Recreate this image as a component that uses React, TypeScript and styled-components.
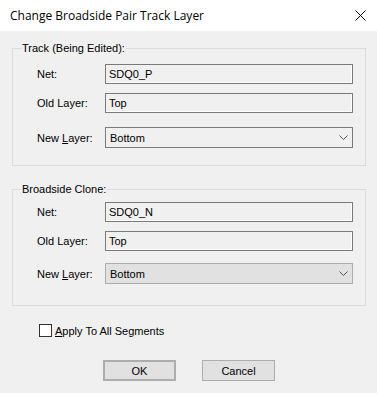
import styled, { createGlobalStyle } from "styled-components";

const GlobalStyle = createGlobalStyle`
  html, body {
    margin: 0;
    padding: 0;
    background: #f0f0f0;
  }
  body {
    font-family: "Liberation Sans", Arial, sans-serif;
    font-size: 11px;
    color: #000;
  }
`;

const Dialog = styled.div`
  width: 377px;
  height: 393px;
  background: #f0f0f0;
  display: flex;
  flex-direction: column;
  overflow: hidden;
`;

const TitleBar = styled.div`
  height: 31px;
  background: #fff;
  display: flex;
  align-items: center;
  justify-content: space-between;
  padding: 0 11px 0 10px;
  box-sizing: border-box;
`;

const Title = styled.span`
  font-family: "Open Sans", "Noto Sans", sans-serif;
  font-size: 12px;
  padding-bottom: 1px;
`;

const Body = styled.div`
  display: flex;
  flex-direction: column;
  padding: 0 11px 0 12px;
`;

const Group = styled.fieldset<{ $top: number; $height: number }>`
  margin: ${(p) => p.$top}px 0 0 0;
  padding: 0 12px 0 0;
  border: 1px solid #dcdcdc;
  height: ${(p) => p.$height}px;
  box-sizing: border-box;
  display: flex;
  flex-direction: column;
  min-width: 0;
`;

const Legend = styled.legend`
  margin-left: 8px;
  padding: 0 1px;
  line-height: 13px;
`;

const Row = styled.div<{ $gap: number }>`
  display: flex;
  align-items: center;
  margin: ${(p) => p.$gap}px 0 0 24px;
`;

const Label = styled.span`
  width: 68px;
  flex-shrink: 0;
`;

const Field = styled.div`
  width: 249px;
  height: 20px;
  box-sizing: border-box;
  border: 1px solid #7a7a7a;
  box-shadow: inset -1px -1px 0 #fff;
  background: #f0f0f0;
  display: flex;
  align-items: center;
  padding-left: 3px;
`;

const Combo = styled.div<{ $disabled?: boolean }>`
  width: 248px;
  height: 21px;
  box-sizing: border-box;
  border: 1px solid ${(p) => (p.$disabled ? "#adadad" : "#7a7a7a")};
  background: ${(p) => (p.$disabled ? "#e1e1e1" : "#f0f0f0")};
  display: flex;
  align-items: center;
  justify-content: space-between;
  padding: 0 4px 0 4px;
`;

const Key = styled.span`
  text-decoration: underline;
`;

const CheckRow = styled.label`
  display: flex;
  align-items: center;
  margin: 18px 0 0 27px;
  gap: 3px;
`;

const Box = styled.span`
  width: 13px;
  height: 13px;
  box-sizing: border-box;
  border: 1px solid #333;
  background: #fff;
`;

const Buttons = styled.div`
  display: flex;
  gap: 26px;
  margin: 23px 0 0 91px;
`;

const Button = styled.button<{ $default?: boolean }>`
  width: 73px;
  height: 21px;
  box-sizing: border-box;
  border: ${(p) => (p.$default ? "2px" : "1px")} solid #adadad;
  background: #e1e1e1;
  font-family: "Liberation Sans", Arial, sans-serif;
  font-size: 11px;
  color: #000;
  padding: 0;
`;

function Chevron() {
  return (
    <svg width="9" height="5" viewBox="0 0 9 5">
      <path d="M0.5 0.5 L4.5 4.5 L8.5 0.5" fill="none" stroke="#555" strokeWidth="1" />
    </svg>
  );
}

function CloseIcon() {
  return (
    <svg width="11" height="11" viewBox="0 0 11 11">
      <path d="M0.5 0.5 L10.5 10.5 M10.5 0.5 L0.5 10.5" stroke="#000" strokeWidth="1" />
    </svg>
  );
}

export default function App() {
  return (
    <Dialog>
      <GlobalStyle />
      <TitleBar>
        <Title>Change Broadside Pair Track Layer</Title>
        <CloseIcon />
      </TitleBar>
      <Body>
        <Group $top={11} $height={124}>
          <Legend>Track (Being Edited):</Legend>
          <Row $gap={9}>
            <Label>Net:</Label>
            <Field>SDQ0_P</Field>
          </Row>
          <Row $gap={9}>
            <Label>Old Layer:</Label>
            <Field>Top</Field>
          </Row>
          <Row $gap={14}>
            <Label>
              New <Key>L</Key>ayer:
            </Label>
            <Combo>
              <span>Bottom</span>
              <Chevron />
            </Combo>
          </Row>
        </Group>
        <Group $top={17} $height={123}>
          <Legend>Broadside Clone:</Legend>
          <Row $gap={6}>
            <Label>Net:</Label>
            <Field>SDQ0_N</Field>
          </Row>
          <Row $gap={9}>
            <Label>Old Layer:</Label>
            <Field>Top</Field>
          </Row>
          <Row $gap={12}>
            <Label>
              New <Key>L</Key>ayer:
            </Label>
            <Combo $disabled>
              <span>Bottom</span>
              <Chevron />
            </Combo>
          </Row>
        </Group>
        <CheckRow>
          <Box />
          <span>
            <Key>A</Key>pply To All Segments
          </span>
        </CheckRow>
        <Buttons>
          <Button $default>OK</Button>
          <Button>Cancel</Button>
        </Buttons>
      </Body>
    </Dialog>
  );
}
